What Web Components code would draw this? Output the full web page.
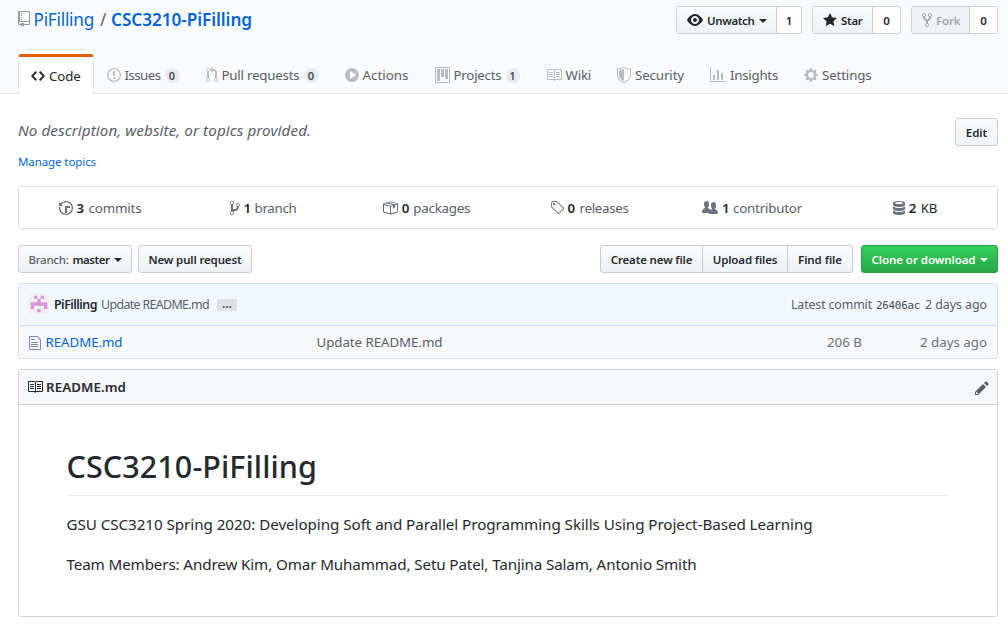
<!DOCTYPE html>
<html lang="en">
<head>
<meta charset="utf-8">
<title>PiFilling/CSC3210-PiFilling</title>
<style>
html,body{margin:0;padding:0;background:#fff}
body{font-family:"Noto Sans","Open Sans",sans-serif;font-size:13.3px;color:#24292e;height:627px;overflow:hidden}
</style>
</head>
<body>
<repo-page></repo-page>
<script>
const ICONS = {
repo:[12,"M4 9H3V8h1v1zm0-3H3v1h1V6zm0-2H3v1h1V4zm0-2H3v1h1V2zm8-1v12c0 .55-.45 1-1 1H6v2l-1.5-1.5L3 16v-2H1c-.55 0-1-.45-1-1V1c0-.55.45-1 1-1h10c.55 0 1 .45 1 1zm-1 10H1v2h2v-1h3v1h5v-2zm0-10H2v9h9V1z"],
code:[14,"M9.5 3L8 4.5 11.5 8 8 11.5 9.5 13 14 8 9.5 3zm-5 0L0 8l4.5 5L6 11.5 2.5 8 6 4.5 4.5 3z"],
issue:[14,"M7 2.3c3.14 0 5.7 2.56 5.7 5.7s-2.56 5.7-5.7 5.7A5.71 5.71 0 0 1 1.3 8c0-3.14 2.56-5.7 5.7-5.7zM7 1C3.14 1 0 4.14 0 8s3.14 7 7 7 7-3.14 7-7-3.14-7-7-7zm1 3H6v5h2V4zm0 6H6v2h2v-2z"],
pull:[12,"M11 11.28V5c-.03-.78-.34-1.47-.94-2.06C9.46 2.35 8.78 2.03 8 2H7V0L4 3l3 3V4h1c.27.02.48.11.69.31.21.2.3.42.31.69v6.28A1.993 1.993 0 0 0 10 15a1.993 1.993 0 0 0 1-3.72zm-1 2.92c-.66 0-1.2-.55-1.2-1.2 0-.65.55-1.2 1.2-1.2.65 0 1.2.55 1.2 1.2 0 .65-.55 1.2-1.2 1.2zM4 3c0-1.11-.89-2-2-2a1.993 1.993 0 0 0-1 3.72v6.56A1.993 1.993 0 0 0 2 15a1.993 1.993 0 0 0 1-3.72V4.72c.59-.34 1-.98 1-1.72zm-.8 10c0 .66-.55 1.2-1.2 1.2-.65 0-1.2-.55-1.2-1.2 0-.65.55-1.2 1.2-1.2.65 0 1.2.55 1.2 1.2zM2 4.2C1.34 4.2.8 3.65.8 3c0-.65.55-1.2 1.2-1.2.65 0 1.2.55 1.2 1.2 0 .65-.55 1.2-1.2 1.2z"],
play:[14,"M14 8A7 7 0 1 1 0 8a7 7 0 0 1 14 0zm-8.223 3.482l4.599-3.066a.5.5 0 0 0 0-.832L5.777 4.518A.5.5 0 0 0 5 4.934v6.132a.5.5 0 0 0 .777.416z"],
project:[15,"M10 12h3V2h-3v10zm-4-2h3V2H6v8zm-4 4h3V2H2v12zm-1 1h13V1H1v14zM14 0H1a1 1 0 0 0-1 1v14a1 1 0 0 0 1 1h13a1 1 0 0 0 1-1V1a1 1 0 0 0-1-1z"],
book:[16,"M3 5h4v1H3V5zm0 3h4V7H3v1zm0 2h4V9H3v1zm11-5h-4v1h4V5zm0 2h-4v1h4V7zm0 2h-4v1h4V9zm2-6v9c0 .55-.45 1-1 1H9.5l-1 1-1-1H2c-.55 0-1-.45-1-1V3c0-.55.45-1 1-1h5.5l1 1 1-1H15c.55 0 1 .45 1 1zm-8 .5L7.5 3H2v9h6V3.5zm7-.5H9.5l-.5.5V12h6V3z"],
shield:[14,"M0 2l7-2 7 2v6.02C14 12.69 8.69 16 7 16c-1.69 0-7-3.31-7-7.98V2zm1 .75L7 1l6 1.75v5.268C13 12.104 8.449 15 7 15c-1.449 0-6-2.896-6-6.982V2.75zm1 .75L7 2v12c-1.207 0-5-2.482-5-5.985V3.5z"],
graph:[16,"M16 14v1H0V0h1v14h15zM5 13H3V8h2v5zm4 0H7V3h2v10zm4 0h-2V6h2v7z"],
gear:[14,"M14 8.77v-1.6l-1.94-.64-.45-1.09.88-1.84-1.13-1.13-1.81.91-1.09-.45-.69-1.92h-1.6l-.63 1.94-1.11.45-1.84-.88-1.13 1.13.91 1.81-.45 1.09L0 7.23v1.59l1.94.64.45 1.09-.88 1.84 1.13 1.13 1.81-.91 1.09.45.69 1.92h1.59l.63-1.94 1.11-.45 1.84.88 1.13-1.13-.92-1.81.47-1.09L14 8.75v.02zM7 11c-1.66 0-3-1.34-3-3s1.34-3 3-3 3 1.34 3 3-1.34 3-3 3z"],
eye:[16,"M8.06 2C3 2 0 8 0 8s3 6 8.06 6C13 14 16 8 16 8s-3-6-7.94-6zM8 12c-2.2 0-4-1.78-4-4 0-2.2 1.8-4 4-4 2.22 0 4 1.8 4 4 0 2.22-1.78 4-4 4zm2-4c0 1.11-.89 2-2 2-1.11 0-2-.89-2-2 0-1.11.89-2 2-2 1.11 0 2 .89 2 2z"],
star:[14,"M14 6l-4.9-.64L7 1 4.9 5.36 0 6l3.6 3.26L2.67 14 7 11.67 11.33 14l-.93-4.74L14 6z"],
fork:[10,"M8 1a1.993 1.993 0 0 0-1 3.72V6L5 8 3 6V4.72A1.993 1.993 0 0 0 2 1a1.993 1.993 0 0 0-1 3.72V6.5l3 3v1.78A1.993 1.993 0 0 0 5 15a1.993 1.993 0 0 0 1-3.72V9.5l3-3V4.72A1.993 1.993 0 0 0 8 1zM2 4.2C1.34 4.2.8 3.65.8 3c0-.65.55-1.2 1.2-1.2.65 0 1.2.55 1.2 1.2 0 .65-.55 1.2-1.2 1.2zm3 10c-.66 0-1.2-.55-1.2-1.2 0-.65.55-1.2 1.2-1.2.65 0 1.2.55 1.2 1.2 0 .65-.55 1.2-1.2 1.2zm3-10c-.66 0-1.2-.55-1.2-1.2 0-.65.55-1.2 1.2-1.2.65 0 1.2.55 1.2 1.2 0 .65-.55 1.2-1.2 1.2z"],
history:[14,"M8 13H6V6h5v2H8v5zM7 1C4.81 1 2.87 2.02 1.59 3.59L0 2v4h4L2.5 4.5C3.55 3.17 5.17 2.3 7 2.3c3.14 0 5.7 2.56 5.7 5.7s-2.56 5.7-5.7 5.7A5.71 5.71 0 0 1 1.3 8c0-.34.03-.67.09-1H.08C.03 7.33 0 7.66 0 8c0 3.86 3.14 7 7 7s7-3.14 7-7-3.14-7-7-7z"],
branch:[10,"M10 5c0-1.11-.89-2-2-2a1.993 1.993 0 0 0-1 3.72v.3c-.02.52-.23.98-.63 1.38-.4.4-.86.61-1.38.63-.83.02-1.48.16-2 .45V4.72a1.993 1.993 0 0 0-1-3.72C.88 1 0 1.89 0 3a2 2 0 0 0 1 1.72v6.56c-.59.35-1 .99-1 1.72 0 1.11.89 2 2 2 1.11 0 2-.89 2-2 0-.53-.2-1-.53-1.36.09-.06.48-.41.59-.47.25-.11.56-.17.94-.17 1.05-.05 1.95-.45 2.75-1.25S8.95 7.77 9 6.73h-.02C9.59 6.37 10 5.73 10 5zM2 1.8c.66 0 1.2.55 1.2 1.2 0 .65-.55 1.2-1.2 1.2C1.35 4.2.8 3.65.8 3c0-.65.55-1.2 1.2-1.2zm0 12.41c-.66 0-1.2-.55-1.2-1.2 0-.65.55-1.2 1.2-1.2.65 0 1.2.55 1.2 1.2 0 .65-.55 1.2-1.2 1.2zm6-8c-.66 0-1.2-.55-1.2-1.2 0-.65.55-1.2 1.2-1.2.65 0 1.2.55 1.2 1.2 0 .65-.55 1.2-1.2 1.2z"],
package:[16,"M1 4.27v7.47c0 .45.3.84.75.97l6.5 1.73c.16.05.34.05.5 0l6.5-1.73c.45-.13.75-.52.75-.97V4.27c0-.45-.3-.84-.75-.97l-6.5-1.74a1.4 1.4 0 0 0-.5 0L1.75 3.3c-.45.13-.75.52-.75.97zm7 9.09l-6-1.59V5l6 1.61v6.75zM2 4l2.5-.67L11 5.06l-2.5.67L2 4zm13 7.77l-6 1.59V6.61l2-.55V8.5l2-.53V5.53L15 5v6.77zm-2-7.24L6.5 2.8l2-.53L15 4l-2 .53z"],
tag:[14,"M7.73 1.73C7.26 1.26 6.62 1 5.96 1H3.5C2.13 1 1 2.13 1 3.5v2.47c0 .66.27 1.3.73 1.77l6.06 6.06c.39.39 1.02.39 1.41 0l4.59-4.59a.996.996 0 0 0 0-1.41L7.73 1.73zM2.38 7.09c-.31-.3-.47-.7-.47-1.13V3.5c0-.88.72-1.59 1.59-1.59h2.47c.42 0 .83.16 1.13.47l6.14 6.13-4.73 4.73-6.13-6.15zM3.01 3h2v2H3V3h.01z"],
people:[16,"M16 12.999c0 .439-.45 1-1 1H7.995c-.539 0-.994-.447-.995-.999H1c-.54 0-1-.561-1-1 0-2.634 3-4 3-4s.229-.409 0-1c-.841-.621-1.058-.59-1-3 .058-2.419 1.367-3 2.5-3s2.442.58 2.5 3c.058 2.41-.159 2.379-1 3-.229.59 0 1 0 1s1.549.711 2.42 2.088C9.196 9.369 10 8.999 10 8.999s.229-.409 0-1c-.841-.62-1.058-.59-1-3 .058-2.419 1.367-3 2.5-3s2.437.581 2.495 3c.059 2.41-.158 2.38-1 3-.229.59 0 1 0 1s3.005 1.366 3.005 4z"],
database:[12,"M6 15c-3.31 0-6-.9-6-2v-2c0-.17.09-.34.21-.5.67.86 3 1.5 5.79 1.5s5.12-.64 5.79-1.5c.13.16.21.33.21.5v2c0 1.1-2.69 2-6 2zm0-4c-3.31 0-6-.9-6-2V7c0-.11.04-.21.09-.31.03-.06.07-.13.12-.19C.88 7.36 3.21 8 6 8s5.12-.64 5.79-1.5c.05.06.09.13.12.19.05.1.09.21.09.31v2c0 1.1-2.69 2-6 2zm0-4c-3.31 0-6-.9-6-2V3c0-1.1 2.69-2 6-2s6 .9 6 2v2c0 1.1-2.69 2-6 2zm0-5c-2.21 0-4 .45-4 1s1.79 1 4 1 4-.45 4-1-1.79-1-4-1z"],
file:[12,"M6 5H2V4h4v1zM2 8h7V7H2v1zm0 2h7V9H2v1zm0 2h7v-1H2v1zm10-7.5V14c0 .55-.45 1-1 1H1c-.55 0-1-.45-1-1V2c0-.55.45-1 1-1h7.5L12 4.5zM11 5L8 2H1v12h10V5z"],
pencil:[14,"M0 12v3h3l8-8-3-3-8 8zm3 2H1v-2h1v1h1v1zm10.3-9.3L12 6 9 3l1.3-1.3a.996.996 0 0 1 1.41 0l1.59 1.59c.39.39.39 1.02 0 1.41z"]
};

const define = (name, html, extra) => customElements.define(name, class extends HTMLElement {
  constructor(){
    super();
    this.attachShadow({mode:"open"}).innerHTML = typeof html === "function" ? html(this) : html;
    if (extra) extra(this);
  }
});

define("repo-page", `<style>:host{display:block}</style>
<repo-head></repo-head><repo-about></repo-about><repo-stats></repo-stats><file-nav></file-nav><commit-box></commit-box><readme-box></readme-box>`);

define("repo-head", `<style>
:host{display:block;box-sizing:border-box;height:94px;background:#fafbfc;border-bottom:1px solid #e1e4e8}
.top{display:flex;justify-content:space-between;padding:6px 10px 0 18px;height:54px;box-sizing:border-box}
.title{display:flex;height:27px;align-items:center;font-size:17.2px;color:#0366d6}
.title gh-icon{color:#959da5;margin:-2px 3.5px 0 0}
.sep{color:#586069;margin:0 4.5px 0 6px}
b{font-weight:600}
.acts{display:flex;gap:10px}
nav{display:flex;height:40px;padding-left:18px}
</style>
<div class="top">
<div class="title"><gh-icon name="repo"></gh-icon><gh-text w="60.5">PiFilling</gh-text><gh-text class="sep" w="6.5">/</gh-text><b><gh-text w="141">CSC3210-PiFilling</gh-text></b></div>
<div class="acts">
<social-btn style="--w:100px;--c:24px" count="1"><gh-icon name="eye"></gh-icon><gh-text w="47.5">Unwatch</gh-text><gh-caret></gh-caret></social-btn>
<social-btn style="--w:60px;--c:27px" count="0"><gh-icon name="star"></gh-icon><gh-text w="21.5">Star</gh-text></social-btn>
<social-btn off style="--w:58px;--c:27px" count="0"><gh-icon name="fork"></gh-icon><gh-text w="24.5">Fork</gh-text></social-btn>
</div></div>
<nav>
<repo-tab on icon="code"><gh-text w="31.5">Code</gh-text></repo-tab>
<repo-tab icon="issue" count="0"><gh-text w="36">Issues</gh-text></repo-tab>
<repo-tab icon="pull" count="0"><gh-text w="78">Pull requests</gh-text></repo-tab>
<repo-tab icon="play"><gh-text w="46">Actions</gh-text></repo-tab>
<repo-tab icon="project" count="1"><gh-text w="48">Projects</gh-text></repo-tab>
<repo-tab icon="book"><gh-text w="25.5">Wiki</gh-text></repo-tab>
<repo-tab icon="shield"><gh-text w="49">Security</gh-text></repo-tab>
<repo-tab icon="graph"><gh-text w="48">Insights</gh-text></repo-tab>
<repo-tab icon="gear"><gh-text w="49.5">Settings</gh-text></repo-tab>
</nav>`);

define("repo-tab", el => `<style>
:host{display:flex;flex:none;align-items:center;box-sizing:border-box;height:40px;border:1px solid transparent;border-top-width:3px;padding:0 12px;color:#586069;gap:4px}
:host([on]){background:#fff;border-color:#e36209 #e1e4e8 #fff;border-radius:3px 3px 0 0;color:#24292e;border-bottom:0}
gh-icon{color:#babec2}
:host([on]) gh-icon{color:#24292e}
.n{box-sizing:border-box;width:15px;height:15px;border-radius:8px;background:#e9ebee;text-align:center;font-size:11px;line-height:15px;font-weight:600;color:#444d56}
:host([count="1"]) .n{width:14px}
</style><gh-icon name="${el.getAttribute("icon")}"></gh-icon><slot></slot>${el.hasAttribute("count")?`<span class="n">${el.getAttribute("count")}</span>`:""}`);

define("social-btn", el => `<style>
:host{display:flex;font-size:11.5px;font-weight:600;height:28px;box-sizing:border-box;border:1px solid #cdd0d3;border-radius:3px;background:#fff;overflow:hidden}
.b{box-sizing:border-box;width:var(--w);padding-left:10px;display:flex;align-items:center;gap:4px;background:linear-gradient(#fafbfc,#eff3f6);border-right:1px solid #cdd0d3}
.n{width:var(--c);text-align:center;line-height:27px}
:host([off]) .b{background:#eff3f6;color:#a1a6ab}
</style><div class="b"><slot></slot></div><div class="n">${el.getAttribute("count")}</div>`);

define("gh-btn", `<style>
:host{display:flex;align-items:center;justify-content:center;box-sizing:border-box;height:28px;width:var(--w);border:1px solid #c9cdd1;border-radius:3px;background:linear-gradient(#fafbfc,#eff3f6);font-size:11.5px;font-weight:600;color:#24292e;gap:4px}
:host([green]){background:linear-gradient(#34d058,#28a745);border-color:#279f43;color:#fff}
:host([first]){border-radius:3px 0 0 3px}:host([mid]){border-radius:0;border-left:0}:host([last]){border-radius:0 3px 3px 0;border-left:0}
</style><slot></slot>`);

define("gh-caret", `<style>:host{display:block;width:0;height:0;border:4px solid transparent;border-top-color:currentColor;border-bottom:0;margin-top:2px}</style>`);

define("repo-about", `<style>
:host{display:flex;justify-content:space-between;padding:24px 10px 0 18px;height:92px;box-sizing:border-box}
.d{font-size:15.2px;font-style:italic;color:#586069;line-height:24px}
.m{font-size:11.5px;color:#0366d6;line-height:18px;margin-top:11px}
</style><div><div class="d"><gh-text w="293">No description, website, or topics provided.</gh-text></div><div class="m"><gh-text w="78">Manage topics</gh-text></div></div>
<gh-btn style="--w:43px"><gh-text w="21.5">Edit</gh-text></gh-btn>`);

define("repo-stats", `<style>
:host{display:grid;grid-template-columns:repeat(6,1fr);margin:0 10px 0 18px;border:1px solid #dfe2e5;border-radius:3px;height:43px;box-sizing:border-box;color:#586069}
div{display:flex;align-items:center;justify-content:center;gap:4px;padding-right:1px}
gh-icon{color:#6a737d}b{font-weight:600;color:#24292e}.k{color:#24292e}
</style>
<div><gh-icon name="history"></gh-icon><b><gh-text w="8">3</gh-text></b><gh-text w="53">commits</gh-text></div>
<div><gh-icon name="branch"></gh-icon><b><gh-text w="7">1</gh-text></b><gh-text w="42">branch</gh-text></div>
<div><gh-icon name="package"></gh-icon><b><gh-text w="7.5">0</gh-text></b><gh-text w="57">packages</gh-text></div>
<div><gh-icon name="tag"></gh-icon><b><gh-text w="8">0</gh-text></b><gh-text w="49">releases</gh-text></div>
<div><gh-icon name="people"></gh-icon><b><gh-text w="7">1</gh-text></b><gh-text w="69">contributor</gh-text></div>
<div><gh-icon name="database"></gh-icon><b><gh-text w="8">2</gh-text></b><gh-text class="k" w="16.5">KB</gh-text></div>`);

define("file-nav", `<style>
:host{display:flex;padding:16px 10px 10px 18px;height:28px}
.g{display:flex;margin-left:auto;margin-right:8px}
.l{color:#586069}
</style><gh-btn style="--w:114px;margin-right:6px"><gh-text class="l" style="font-weight:500" w="40">Branch:</gh-text><gh-text w="37">master</gh-text><gh-caret></gh-caret></gh-btn>
<gh-btn style="--w:114px"><gh-text w="93">New pull request</gh-text></gh-btn>
<div class="g"><gh-btn first style="--w:103px"><gh-text w="81.5">Create new file</gh-text></gh-btn><gh-btn mid style="--w:85px"><gh-text w="64.5">Upload files</gh-text></gh-btn><gh-btn last style="--w:65px"><gh-text w="44">Find file</gh-text></gh-btn></div>
<gh-btn green style="--w:137px"><gh-text w="104">Clone or download</gh-text><gh-caret></gh-caret></gh-btn>`);

define("commit-box", `<style>
:host{display:block;margin:0 10px 0 18px}
.c{display:flex;align-items:center;height:43px;box-sizing:border-box;border:1px solid #c8e1ff;border-radius:3px 3px 0 0;background:#f1f8ff;padding:0 10px 0 10px;font-size:12.4px;color:#586069}
.c svg{display:block;margin-right:5px;margin-top:-2px}
.c b{font-weight:600;color:#24292e;margin-right:4px}
.dots{width:20px;height:12px;background:#dfe2e5;border-radius:1px;margin-left:8px;color:#444d56;font-weight:600;font-size:12px;line-height:10px;text-align:center}
.late{margin-left:auto}.sha{font-family:"DejaVu Sans Mono",monospace;font-size:10.8px;color:#444d56;margin:1px 5px 0 4px}
.f{display:grid;grid-template-columns:287.5px 1fr 160px 125px;align-items:center;height:33px;box-sizing:border-box;background:#f6f8fa;border:1px solid #dfe2e5;border-top:0;border-radius:0 0 3px 3px;padding:0 10px 0 10px;color:#6a737d}
.n{display:flex;align-items:center;gap:4.5px;color:#0366d6}.n gh-icon{color:#7a8ba3;margin-top:1px}
.r{text-align:right}
</style>
<div class="c"><svg width="20" height="20" viewBox="0 0 20 20"><rect width="20" height="20" rx="3" fill="#f0f0f0"/><path fill="#d896e0" d="M5 1.67h3.33V5H5zM11.67 1.67H15V5h-3.33zM8.33 5h3.34v3.33H8.33zM1.67 8.33h16.66v3.34H1.67zM1.67 11.67H5V15H1.67zM15 11.67h3.33V15H15zM8.33 15h3.34v3.33H8.33z"/></svg>
<b><gh-text w="43">PiFilling</gh-text></b><gh-text w="108">Update README.md</gh-text><span class="dots">…</span>
<gh-text class="late" w="81">Latest commit</gh-text><gh-text class="sha" w="44">26406ac</gh-text><gh-text w="62">2 days ago</gh-text></div>
<div class="f"><div class="n"><gh-icon name="file"></gh-icon><gh-text w="77">README.md</gh-text></div><gh-text w="126" style="color:#586069">Update README.md</gh-text><div class="r"><gh-text w="35">206 B</gh-text></div><div class="r"><gh-text w="67">2 days ago</gh-text></div></div>`);

define("readme-box", `<style>
:host{display:block;box-sizing:border-box;margin:10px 10px 0 18px;height:248px;border:1px solid #d1d5da;border-radius:3px}
header{display:flex;align-items:center;height:34px;background:#f6f8fa;border-bottom:1px solid #d1d5da;padding:0 8px 0 8px;font-weight:600;gap:3px;border-radius:2px 2px 0 0}
.p{margin-left:auto;color:#586069;margin-top:2px}
main{padding:37px 48px 0 47.5px;font-size:15.2px}
h1{margin:0 0 16px;font-size:30.5px;line-height:48px;height:53px;font-weight:500;border-bottom:1px solid #eaecef}
p{margin:0 0 16px;line-height:24px}
</style><header><gh-icon name="book"></gh-icon><gh-text w="80">README.md</gh-text><gh-icon class="p" name="pencil"></gh-icon></header>
<main><h1><gh-text w="250.5">CSC3210-PiFilling</gh-text></h1>
<p><gh-text w="746">GSU CSC3210 Spring 2020: Developing Soft and Parallel Programming Skills Using Project-Based Learning</gh-text></p>
<p><gh-text w="630">Team Members: Andrew Kim, Omar Muhammad, Setu Patel, Tanjina Salam, Antonio Smith</gh-text></p></main>`);

define("gh-icon", el => {
  const [w,d] = ICONS[el.getAttribute("name")];
  return `<style>:host{display:block;flex:none;width:${w}px;height:16px}svg{display:block}</style><svg width="${w}" height="16" viewBox="0 0 ${w} 16" fill="currentColor"><path fill-rule="evenodd" d="${d}"/></svg>`;
});

// A run of text tracked to an exact advance width (attribute w, in px).
customElements.define("gh-text", class extends HTMLElement {
  constructor(){
    super();
    this.attachShadow({mode:"open"}).innerHTML = `<style>:host{display:inline-block;white-space:pre;flex:none}</style><span><slot></slot></span>`;
  }
  connectedCallback(){
    const w = +this.getAttribute("w"), s = this.shadowRoot.querySelector("span");
    const n = this.textContent.length;
    s.style.letterSpacing = (w - s.getBoundingClientRect().width) / n + "px";
    this.style.width = w + "px";
  }
});
</script>
</body>
</html>
